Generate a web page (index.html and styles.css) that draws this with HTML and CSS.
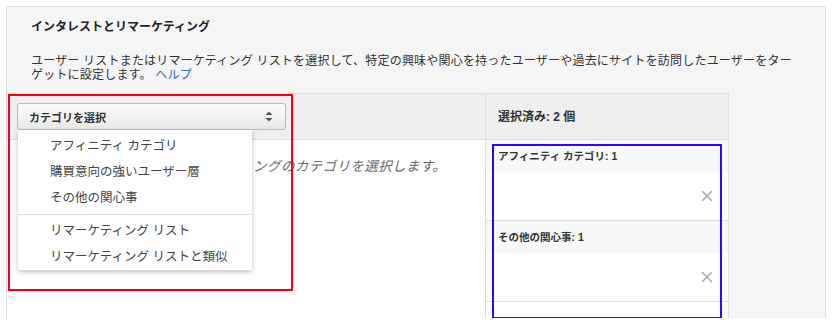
FILE: index.html
```html
<!DOCTYPE html>
<html lang="ja">
<head>
<meta charset="UTF-8">
<title>インタレストとリマーケティング</title>
<link rel="stylesheet" href="styles.css">
</head>
<body>
<div class="panel">
  <h2 class="title">インタレストとリマーケティング</h2>
  <p class="desc">ユーザー リストまたはリマーケティング リストを選択して、特定の興味や関心を持ったユーザーや過去にサイトを訪問したユーザーをターゲットに設定します。 <a href="#">ヘルプ</a></p>

  <div class="picker">
    <div class="head head-left">
      <div class="select-wrap">
        <div class="select">
          <span>カテゴリを選択</span>
          <svg class="arrows" width="8" height="11" viewBox="0 0 8 11"><path d="M4 0.5 L7.5 4 H0.5 Z M4 10.5 L7.5 7 H0.5 Z" fill="#555"/></svg>
        </div>
        <ul class="menu">
          <li>アフィニティ カテゴリ</li>
          <li>購買意向の強いユーザー層</li>
          <li>その他の関心事</li>
          <li class="sep"></li>
          <li>リマーケティング リスト</li>
          <li>リマーケティング リストと類似</li>
        </ul>
      </div>
    </div>
    <div class="head head-right">選択済み: 2 個</div>

    <div class="body body-left">
      <p class="hint">インタレストまたはリマーケティングのカテゴリを選択します。</p>
    </div>
    <div class="body body-right">
      <div class="group">
        <div class="group-head">アフィニティ カテゴリ: 1</div>
        <div class="group-body">
          <svg class="remove" width="12" height="12" viewBox="0 0 12 12"><path d="M1 1 L11 11 M11 1 L1 11" stroke="#aaa" stroke-width="1.6"/></svg>
        </div>
      </div>
      <div class="group">
        <div class="group-head">その他の関心事: 1</div>
        <div class="group-body">
          <svg class="remove" width="12" height="12" viewBox="0 0 12 12"><path d="M1 1 L11 11 M11 1 L1 11" stroke="#aaa" stroke-width="1.6"/></svg>
        </div>
      </div>
    </div>

    <div class="mark mark-red"></div>
    <div class="mark mark-blue"></div>
  </div>
</div>
</body>
</html>
```

FILE: styles.css
```css
body {
  margin: 0;
  background: #fff;
  font-family: "Liberation Sans", "Noto Sans CJK JP", sans-serif;
  color: #333;
}
.panel {
  margin: 6px 0 0 6px;
  width: 820px;
  height: 312px;
  box-sizing: border-box;
  border: 1px solid #ddd;
  border-bottom: none;
  background: #f5f5f5;
}
.title {
  margin: 0;
  padding: 12px 24px 0;
  font-size: 12px;
  line-height: 16px;
  font-weight: bold;
  color: #222;
}
.desc {
  margin: 19px 0 0;
  padding: 0 24px;
  font-size: 12px;
  line-height: 14px;
  letter-spacing: 0.2px;
  color: #333;
}
.desc a { color: #2a6fd0; text-decoration: none; }

.picker {
  position: relative;
  margin: 11px 0 0 -1px;
  width: 723px;
  height: 225px;
  box-sizing: border-box;
  border: 1px solid #ddd;
  border-bottom: none;
  background: #fff;
  display: grid;
  grid-template-columns: 479px 1fr;
  grid-template-rows: 46px 1fr;
}
.head {
  background: #efefef;
  border-bottom: 1px solid #ddd;
}
.head-left {
  border-right: 1px solid #ddd;
  padding: 9px 10px;
}
.head-right {
  padding-left: 12px;
  font-size: 12px;
  font-weight: bold;
  line-height: 46px;
  color: #333;
}
.select-wrap { position: relative; width: 269px; }
.select {
  height: 27px;
  box-sizing: border-box;
  border: 1px solid #a4bde4;
  border-radius: 3px;
  background: linear-gradient(#fbfbfb, #e9e9e9);
  display: flex;
  align-items: center;
  justify-content: space-between;
  padding: 0 12px 0 11px;
  font-size: 11px;
  font-weight: bold;
  color: #333;
}
.menu {
  position: absolute;
  left: 1px;
  top: 27px;
  width: 234px;
  margin: 0;
  padding: 3px 0 0;
  list-style: none;
  background: #fff;
  box-shadow: 0 2px 5px rgba(0, 0, 0, 0.25);
  z-index: 2;
}
.menu li {
  height: 26px;
  line-height: 26px;
  padding-left: 32px;
  font-size: 12.5px;
  color: #444;
}
.menu li.sep {
  height: 0;
  margin: 3px 0;
  border-top: 1px solid #ddd;
}
.body-left { border-right: 1px solid #ddd; }
.hint {
  margin: 18px 0 0;
  text-align: center;
  font-size: 13.5px;
  line-height: 18px;
  font-style: italic;
  letter-spacing: 0.4px;
  color: #666;
}
.group { border-bottom: 1px solid #ddd; }
.group-head {
  height: 32px;
  line-height: 32px;
  padding-left: 12px;
  background: #f7f8f8;
  font-size: 10.5px;
  font-weight: bold;
  color: #333;
}
.group-body {
  height: 48px;
  display: flex;
  align-items: center;
  justify-content: flex-end;
  padding-right: 15px;
}
.mark {
  position: absolute;
  box-sizing: border-box;
  pointer-events: none;
  z-index: 3;
}
.mark-red {
  left: 1px;
  top: 0;
  width: 285px;
  height: 197px;
  border: 2px solid #f5001a;
}
.mark-blue {
  left: 485px;
  top: 50px;
  width: 230px;
  height: 175px;
  border: 2px solid #3a00ff;
}
```
